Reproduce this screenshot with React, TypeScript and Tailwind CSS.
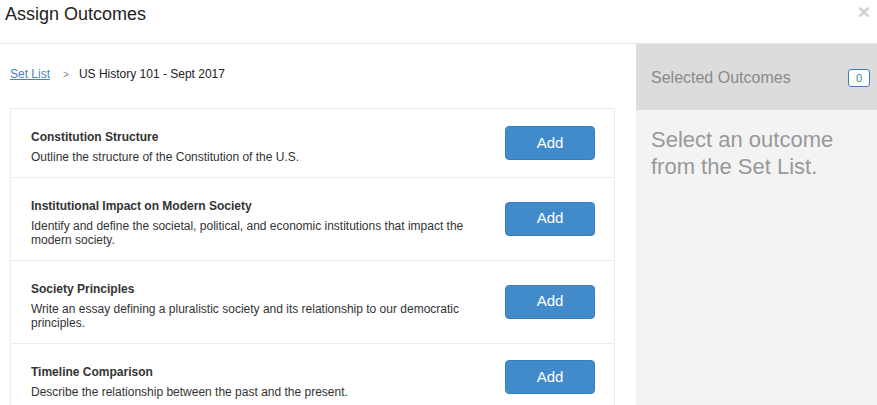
const outcomes = [
  {
    title: "Constitution Structure",
    desc: "Outline the structure of the Constitution of the U.S.",
  },
  {
    title: "Institutional Impact on Modern Society",
    desc: "Identify and define the societal, political, and economic institutions that impact the modern society.",
  },
  {
    title: "Society Principles",
    desc: "Write an essay defining a pluralistic society and its relationship to our democratic principles.",
  },
  {
    title: "Timeline Comparison",
    desc: "Describe the relationship between the past and the present.",
  },
];

export default function App() {
  return (
    <div
      className="w-[877px] h-[405px] overflow-hidden bg-white flex flex-col"
      style={{ fontFamily: '"Liberation Sans", Arial, sans-serif' }}
    >
      <div className="h-[44px] shrink-0 border-b border-[#e5e5e5] flex items-start justify-between pl-[5px] pr-[7px]">
        <h1 className="text-[18px] leading-[20px] pt-[4px] text-[#222]">Assign Outcomes</h1>
        <span className="text-[21px] leading-[20px] pt-[2px] font-bold text-[#d0d0d0]">×</span>
      </div>

      <div className="flex flex-1 min-h-0">
        <div className="w-[636px] shrink-0 pl-[10px] pr-[21px]">
          <div className="h-[64px] flex items-center text-[12px] pb-[4px]">
            <a href="#" className="text-[#4a83bf] underline">Set List</a>
            <span className="text-[#888] text-[10px] ml-[13px] mr-[10px]">&gt;</span>
            <span className="text-[#222]">US History 101 - Sept 2017</span>
          </div>

          <div className="border border-[#ececec]">
            {outcomes.map((o, i) => (
              <div
                key={i}
                className={`flex items-center pl-[20px] pr-[19px] ${i > 0 ? "border-t border-[#ececec]" : ""}`}
              >
                <div className="w-[450px] pt-[19px] pb-[12px] text-[#333]">
                  <div className="text-[12px] leading-[18px] font-bold">{o.title}</div>
                  <div className="text-[12px] leading-[14.5px] mt-[4px]">{o.desc}</div>
                </div>
                <button className="ml-auto w-[90px] h-[34px] rounded-[4px] bg-[#428bca] border border-[#3a7fbd] text-white text-[15px]">
                  Add
                </button>
              </div>
            ))}
          </div>
        </div>

        <div className="flex-1 bg-[#f3f3f3] flex flex-col">
          <div className="h-[66px] bg-[#dcdcdc] flex items-center justify-between pl-[15px] pr-[7px] pt-[2px]">
            <span className="text-[16px] text-[#8a8a8a]">Selected Outcomes</span>
            <span className="w-[22px] h-[18px] rounded-[3px] border border-[#3a7fc1] bg-white text-[#3a7fc1] text-[11px] flex items-center justify-center">
              0
            </span>
          </div>
          <p className="pl-[15px] pt-[16px] text-[22px] leading-[27px] text-[#999]">
            Select an outcome from the Set List.
          </p>
        </div>
      </div>
    </div>
  );
}
